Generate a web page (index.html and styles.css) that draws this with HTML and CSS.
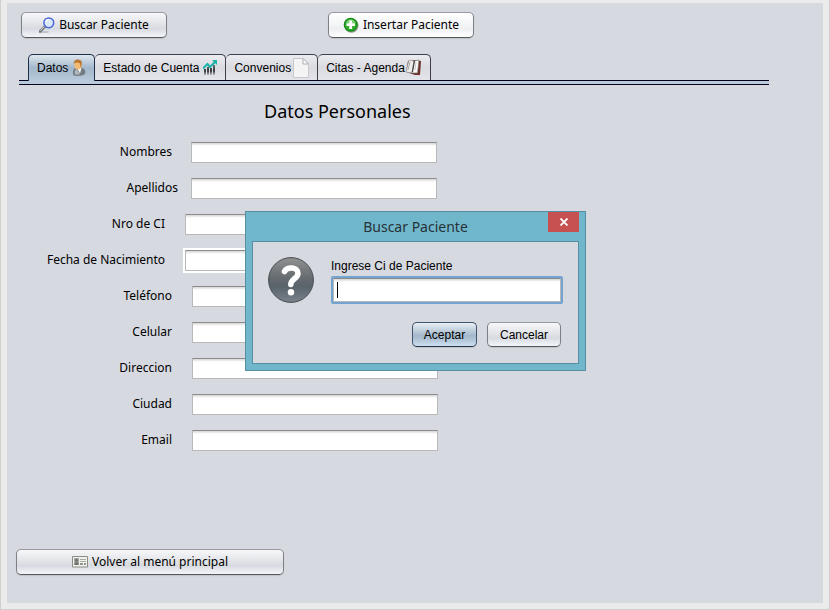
FILE: index.html
```html
<!DOCTYPE html>
<html lang="es">
<head>
<meta charset="utf-8">
<title>Pacientes</title>
<link rel="stylesheet" href="styles.css">
</head>
<body>
<div class="frame">
<main class="panel">
  <div class="toolbar">
    <button class="btn btn-tool" type="button">
      <svg width="16" height="16" viewBox="0 0 16 16"><ellipse cx="5" cy="15" rx="5" ry="1" fill="#bfc2c8"/><path d="M1 14.500L6 9.500" stroke="#777b80" stroke-width="2.600" stroke-linecap="round"/><path d="M1.500 13.500L5.500 9.500" stroke="#d9dce0" stroke-width="1"/><circle cx="9.800" cy="5.800" r="4.900" fill="#dce8fb" stroke="#4a68d8" stroke-width="1.500"/><path d="M6.800 5.500a3 3 0 0 1 3-2.700" fill="none" stroke="#fff" stroke-width="1.400"/></svg>
      <span>Buscar Paciente</span>
    </button>
    <button class="btn btn-tool btn-light" type="button">
      <svg width="16" height="16" viewBox="0 0 16 16"><circle cx="8.500" cy="8.700" r="7" fill="#8f9a8f"/><circle cx="7.700" cy="7.700" r="7" fill="#158a17"/><circle cx="7.700" cy="7.700" r="5.700" fill="#2fae2c"/><path d="M3 6a5 5 0 0 1 9.500 0z" fill="#74cf6c"/><path d="M7.700 3.500v8.400M3.500 7.700h8.400" stroke="#fff" stroke-width="2.800"/></svg>
      <span>Insertar Paciente</span>
    </button>
  </div>

  <div class="tabs" role="tablist">
    <button class="tab tab-active" role="tab" aria-selected="true" type="button"><span>Datos</span>
      <svg width="14" height="18" viewBox="0 0 14 18"><path d="M1.500 16.500c-1.500-5 .5-8 4-8h3.500c4 1 5 4 4 6.500-2 2-7 2.500-11.500 1.500z" fill="#737b83"/><path d="M3 15.500c-.5-3 0-5 1.500-5.500l3.500 5.500z" fill="#b3b9be"/><path d="M5 9l3 5.500 1.500-5.500z" fill="#f5f5f5"/><ellipse cx="6" cy="6" rx="3.600" ry="4.600" fill="#f3bb74"/><path d="M1.800 5C1.500 1 5 0 7 .8c3.500 0 3.500 4.200 1.700 8L8 4.500C6 3 3.500 3 1.800 5z" fill="#b87832"/></svg></button>
    <button class="tab" role="tab" type="button"><span>Estado de Cuenta</span>
      <svg width="14" height="16" viewBox="0 0 14 16"><defs><linearGradient id="bars" x1="0" y1="0" x2="0" y2="1"><stop offset="0" stop-color="#6b7073"/><stop offset=".6" stop-color="#34383a"/><stop offset="1" stop-color="#b9bcc2"/></linearGradient></defs><path d="M1 9h2v6H1zM4 7h2v8H4zM7 8h2v7H7zM10 5h2v10h-2z" fill="url(#bars)"/><path d="M0 8.500l4.500-4.500 2.500 3 5-5" fill="none" stroke="#1db2a8" stroke-width="2"/><path d="M9 0h5v5z" fill="#1db2a8"/></svg></button>
    <button class="tab tab-page" role="tab" type="button"><span>Convenios</span>
      <svg width="16" height="20" viewBox="0 0 16 20"><path d="M.5.500h9.500l5.500 5.500v13.500H.5z" fill="#f5f4f5" stroke="#c9c9cd"/><path d="M10 .5v5.500h5.500z" fill="#fff" stroke="#aaaeb2"/></svg></button>
    <button class="tab tab-book" role="tab" type="button"><span>Citas - Agenda</span>
      <svg width="17" height="17" viewBox="0 0 17 17"><path d="M3 2l6-1 7 1-1 14-5 0-9-3z" fill="#6d3027"/><path d="M4 1l5 1-2 12-6-1z" fill="#eeeeec" stroke="#999" stroke-width=".7"/><path d="M9 2l5-1-1.500 13-5.500 0z" fill="#fbfbfa" stroke="#777" stroke-width=".7"/><path d="M9.500 2L7.500 13" stroke="#333"/><path d="M5 3L3 11" stroke="#aaa"/><path d="M11 3l-1 8" stroke="#ccc"/></svg></button>
  </div>

  <form class="data">
    <h1>Datos Personales</h1>
    <div class="row row-name"><label for="nombres">Nombres</label><input class="field" id="nombres" type="text"></div>
    <div class="row row-surname"><label for="apellidos">Apellidos</label><input class="field" id="apellidos" type="text"></div>
    <div class="row row-id"><label for="ci">Nro de CI</label><input class="field" id="ci" type="text"></div>
    <div class="row row-id row-date"><label for="fecha">Fecha de Nacimiento</label><input class="field" id="fecha" type="text"></div>
    <div class="row"><label for="tel">Teléfono</label><input class="field" id="tel" type="text"></div>
    <div class="row"><label for="cel">Celular</label><input class="field" id="cel" type="text"></div>
    <div class="row"><label for="dir">Direccion</label><input class="field" id="dir" type="text"></div>
    <div class="row"><label for="ciudad">Ciudad</label><input class="field" id="ciudad" type="text"></div>
    <div class="row"><label for="email">Email</label><input class="field" id="email" type="text"></div>
  </form>

  <button class="btn btn-back" type="button">
    <svg width="16" height="12" viewBox="0 0 16 12"><path d="M.5.500h15v10.500H.5z" fill="#f2f2ee" stroke="#8b8d87"/><path d="M2 2h5v7H2z" fill="#a5a9a3"/><circle cx="4.500" cy="4.300" r="1.500" fill="#70746f"/><path d="M2.500 9c0-4 4-4 4 0z" fill="#70746f"/><path d="M8 3.500h6M8 5.500h6" stroke="#aaaca6"/><path d="M8 8h6" stroke="#92958f" stroke-width="2" stroke-dasharray="3 1"/></svg>
    <span>Volver al menú principal</span>
  </button>
</main>
</div>

<div class="dialog" role="dialog" aria-labelledby="dlg-title">
  <div class="dialog-bar">
    <h2 id="dlg-title">Buscar Paciente</h2>
    <button class="close" type="button" aria-label="Cerrar"><svg width="8" height="8" viewBox="0 0 8 8"><path d="M.5.500l7 7M7.500.500l-7 7" stroke="#fff" stroke-width="1.800"/></svg></button>
  </div>
  <form class="dialog-body">
    <svg class="question" width="46" height="46" viewBox="0 0 46 46">
      <defs><linearGradient id="ball" x1="0" y1="0" x2="0" y2="1"><stop offset="0" stop-color="#919191"/><stop offset=".45" stop-color="#666c70"/><stop offset=".65" stop-color="#59636a"/><stop offset="1" stop-color="#7a838c"/></linearGradient></defs>
      <circle cx="23" cy="23" r="22.400" fill="url(#ball)" stroke="#454b52"/>
      <path d="M16.500 14.500c2.500-5 13.500-5 13.500 2 0 5-7.200 5-7.200 11" fill="none" stroke="#fff" stroke-width="5.600" stroke-linecap="round"/><circle cx="23" cy="35.300" r="3.200" fill="#fff"/>
    </svg>
    <div class="prompt">
      <label for="buscar-ci">Ingrese Ci de Paciente</label>
      <div class="focus-ring"><input class="field" id="buscar-ci" type="text"><span class="caret"></span></div>
      <div class="actions">
        <button class="btn btn-dialog btn-primary" type="button">Aceptar</button>
        <button class="btn btn-dialog" type="button">Cancelar</button>
      </div>
    </div>
  </form>
</div>
</body>
</html>
```
FILE: styles.css
```css
* { box-sizing: border-box; }
body {
  margin: 0;
  background: #ebebeb;
  color: #000;
  font: 12px/16px "Noto Sans", sans-serif;
}
button, input { font: inherit; color: inherit; margin: 0; }
h1, h2 { margin: 0; font-weight: 400; }
svg { flex: none; display: block; }

.frame {
  min-height: 100vh;
  display: flex;
  padding: 3px 6px 6px;
  border: solid #cfcfcf;
  border-width: 0 1px 1px;
}
.panel {
  flex: 1;
  padding: 9px 54px 28px 9px;
  background: #d6d9e0;
  display: flex;
  flex-direction: column;
  align-items: flex-start;
}

.btn {
  display: flex;
  align-items: center;
  justify-content: center;
  gap: 4px;
  padding: 0;
  border: 1px solid #7e8087;
  border-top-color: #979aa2;
  border-bottom-color: #55575c;
  border-radius: 5px;
  background: linear-gradient(#f8f8fa, #dddfe3 55%, #d7dae0 65%, #f3f5fb);
  box-shadow: 0 1px 1px #bfc3cb;
}
.btn-light { background: linear-gradient(#fff, #f2f3f5 55%, #eeeff1 65%, #fff); }
.btn-tool { width: 146px; height: 26px; }
.toolbar { display: flex; gap: 161px; padding-left: 5px; }

.tabs {
  align-self: stretch;
  display: flex;
  align-items: flex-end;
  margin: 16px 0 0 3px;
  padding: 0 0 4px 9px;
  border-bottom: 1px solid #04041c;
  background: linear-gradient(#04041c 1px, #b9cadb 1px) 0 100% / 100% 4px no-repeat;
}
.tab {
  display: flex;
  align-items: center;
  gap: 4px;
  height: 26px;
  padding: 0 8px;
  border: 1px solid #3d3f4a;
  border-bottom: 0;
  border-left-width: 0;
  border-radius: 5px 5px 0 0;
  background: linear-gradient(#ececf0, #d9dbe1 50%, #e3e5ea);
  font: 12px/16px "Liberation Sans", sans-serif;
}
.tab-page { gap: 2px; }
.tab-book { gap: 0; }
.tab-active {
  height: 27px;
  margin-bottom: -1px;
  border-left-width: 1px;
  border-color: #1d3049;
  background: linear-gradient(#dfe7ee, #a3b8cc 50%, #b8cadb);
}

.data { width: 422px; padding-top: 14px; }
.data h1 { padding-left: 248px; font-size: 18px; line-height: 24px; margin-bottom: 19px; }
.row { display: flex; height: 36px; align-items: flex-start; gap: 20px; }
.row label { width: 156px; text-align: right; line-height: 20px; white-space: nowrap; }
.row .field { flex: 1; }
.row-name { padding-right: 1px; gap: 19px; }
.row-surname { padding-right: 1px; gap: 13px; }
.row-surname label { width: 162px; }
.row-id label { width: 149px; }
.field {
  min-width: 0;
  height: 21px;
  padding: 0 5px;
  border: 1px solid #b9b9b9;
  border-top-color: #8b8b8b;
  border-radius: 0;
  background: linear-gradient(#d5d5d5, #fff 3px);
  outline: 0;
}
.row-date .field { box-shadow: 0 0 0 2px #fff; }
.btn-back { width: 268px; height: 26px; margin-top: auto; }

.dialog {
  position: absolute;
  left: 245px;
  top: 211px;
  width: 341px;
  padding: 0 6px 6px;
  border: 1px solid #568fa2;
  background: #71b7cc;
  font: 12px/16px "Liberation Sans", sans-serif;
}
.dialog-bar { height: 29px; position: relative; text-align: center; }
.dialog-bar h2 { font: 14px/30px "Noto Sans", sans-serif; color: #263238; }
.close {
  position: absolute;
  right: 0;
  top: 0;
  width: 31px;
  height: 20px;
  display: grid;
  place-items: center;
  padding: 0;
  border: 0;
  background: #c75050;
}
.dialog-body {
  display: flex;
  gap: 16px;
  padding: 15px 15px 16px;
  border: 1px solid #568fa2;
  background: #d6d9e0;
}
.prompt { flex: 1; }
.prompt label { display: block; padding: 1px 0 0 1px; }
.focus-ring { position: relative; display: flex; margin: 2px 0 0 1px; border: 2px solid #73a4d1; border-radius: 2px; }
.focus-ring .field { flex: 1; height: 24px; }
.caret { position: absolute; left: 4px; top: 4px; width: 1px; height: 16px; background: #000; }
.actions { display: flex; justify-content: flex-end; gap: 10px; margin: 18px 2px 0 0; }
.btn-dialog { width: 74px; height: 25px; }
.btn-primary {
  width: 65px;
  border-color: #40546b;
  border-bottom-color: #1f3349;
  background: linear-gradient(#e9eff4, #a3b8cb 55%, #a9bed1 65%, #cddfef);
}
```
